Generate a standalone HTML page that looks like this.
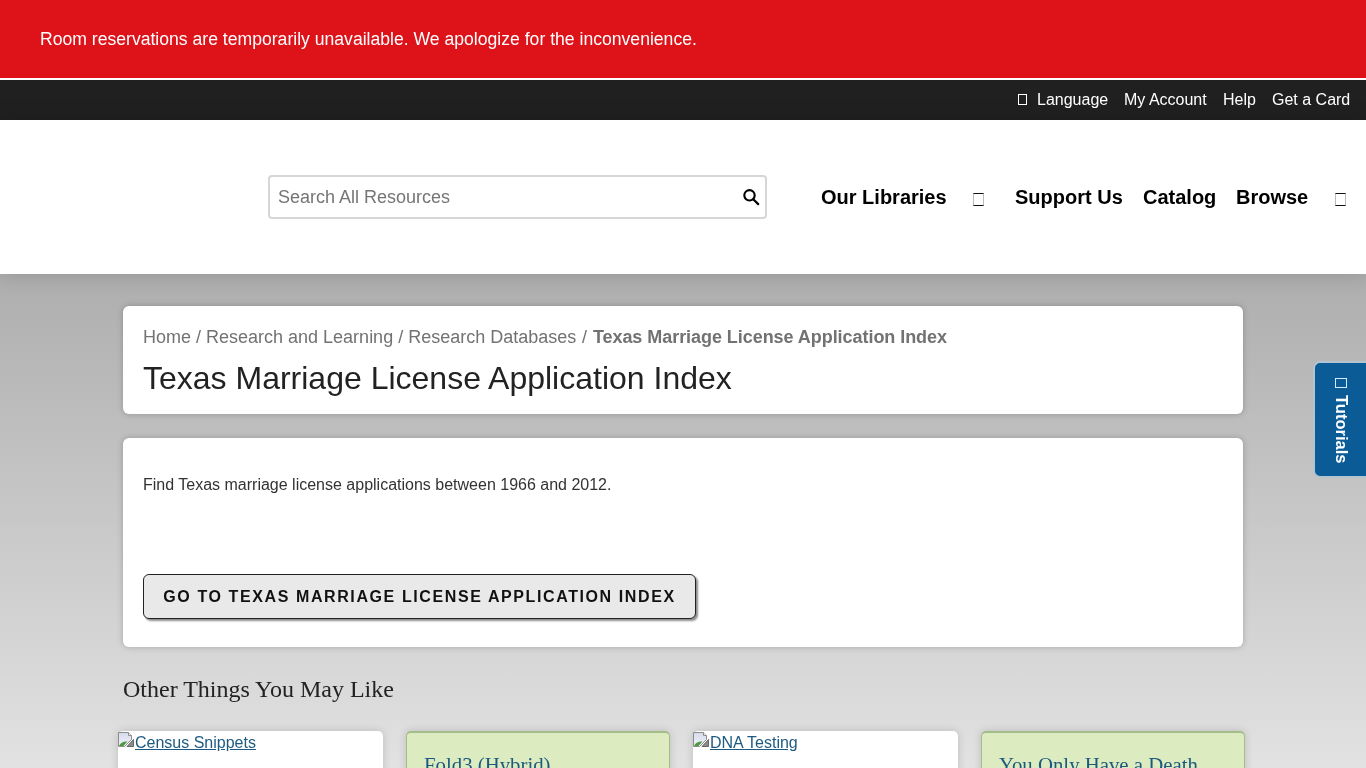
<!DOCTYPE html>
<html><head><meta charset="utf-8">
<style>
*{box-sizing:border-box;margin:0;padding:0}
html,body{width:1366px;height:768px;overflow:hidden}
body{will-change:transform;font-family:"Liberation Sans",sans-serif;position:relative;background:#fff}
.abs{position:absolute;white-space:nowrap}
.tofu{display:inline-block;border:1px solid currentColor;box-sizing:border-box}
.tofu2{z-index:3;border-top:1px solid #111;border-bottom:1px solid #111;border-left:1px solid #bbb;border-right:1px solid #bbb}
#alert{position:absolute;left:0;top:0;width:1366px;height:78px;background:#de1219}
#alert .t{left:40px;top:29px;font-size:17.6px;line-height:20px;color:#fff}
#wl{position:absolute;left:0;top:78px;width:1366px;height:2px;background:#fff}
#util{position:absolute;left:0;top:80px;width:1366px;height:40px;background:#202020;color:#fff;font-size:16px}
#util .t{top:10px;line-height:20px}
#hdr{position:absolute;left:0;top:120px;width:1366px;height:154px;background:#fff;box-shadow:0 0 20px rgba(0,0,0,.16);z-index:2}
#search{position:absolute;left:268px;top:175px;width:499px;height:44px;border:2px solid #d6d6d6;border-radius:4px;background:#fff;z-index:3}
#search .ph{left:8px;top:9px;font-size:18px;line-height:22px;color:#757575}
.nav{z-index:3;top:185px;font-size:20px;line-height:24px;font-weight:bold;color:#000}
#main{position:absolute;left:0;top:274px;width:1366px;height:494px;background:linear-gradient(#aeaeae,#e2e2e2)}
.card{position:absolute;background:#fff;border-radius:6px;box-shadow:0 0 6px rgba(0,0,0,.22)}
#c1{left:123px;top:306px;width:1120px;height:108px}
#c2{left:123px;top:438px;width:1120px;height:209px}
.bc{left:20px;top:20px;font-size:18px;line-height:22px;color:#727272}
.bc b{font-weight:bold}
.h1{left:20px;top:52px;font-size:32px;line-height:40px;color:#222}
.desc{left:20px;top:37px;font-size:16px;line-height:20px;color:#333}
#btn{position:absolute;left:20px;top:136px;width:553px;height:45px;border:1px solid #222;border-radius:6px;background:#e9e9e9;box-shadow:2px 2px 2px rgba(0,0,0,.45);font-weight:bold;font-size:16px;letter-spacing:1.6px;color:#111;text-align:center;line-height:43px}
#other{left:123px;top:675px;font-family:"Liberation Serif",serif;font-size:24px;line-height:28px;color:#222}
.rc{position:absolute;top:731px;height:60px;border-radius:5px;box-shadow:0 0 8px rgba(0,0,0,.16)}
.rc.w{background:#fff}
.rc.g{background:#dcebc0;border:1px solid #a4bd88;border-top-width:2px}
.lnk{font-size:16px;color:#1d5a82;text-decoration:underline}
.ser{font-family:"Liberation Serif",serif;font-size:20.8px;color:#1b5a7e}
#tut{position:absolute;left:1313px;top:361px;width:53px;height:117px;background:#0a5b96;border-radius:7px 0 0 7px;border:2px solid #b3c3cf;border-right:none}
#tut .tt{writing-mode:vertical-rl;font-size:16.5px;font-weight:bold;line-height:20px;color:#fff;left:17px;top:32px}
#tut .tb{left:20px;top:15px;width:12px;height:10px;border:1px solid #d4ecff}
</style></head><body>
<div id="alert"><div class="abs t">Room reservations are temporarily unavailable. We apologize for the inconvenience.</div></div>
<div id="wl"></div>
<div id="util">
 <span class="abs tofu" style="left:1018px;top:14px;width:9px;height:11px"></span>
 <span class="abs t" style="left:1037px">Language</span>
 <span class="abs t" style="left:1124px">My Account</span>
 <span class="abs t" style="left:1223px">Help</span>
 <span class="abs t" style="left:1272px">Get a Card</span>
</div>
<div id="hdr"></div>
<div id="search"><span class="abs ph">Search All Resources</span>
 <svg class="abs" style="left:472px;top:12px" width="18" height="18" viewBox="0 0 18 18"><circle cx="7.5" cy="6.3" r="5.2" fill="none" stroke="#000" stroke-width="2.1"/><line x1="11.3" y1="10.2" x2="16.2" y2="15.1" stroke="#000" stroke-width="2.2" stroke-linecap="round"/></svg>
</div>
<span class="abs nav" style="left:821px">Our Libraries</span>
<span class="abs tofu2" style="left:973px;top:193px;width:11px;height:13px"></span>
<span class="abs nav" style="left:1015px">Support Us</span>
<span class="abs nav" style="left:1143px">Catalog</span>
<span class="abs nav" style="left:1236px">Browse</span>
<span class="abs tofu2" style="left:1335px;top:193px;width:11px;height:13px"></span>
<div id="main"></div>
<div class="card" id="c1">
 <div class="abs bc">Home / Research and Learning / Research Databases <span style="margin-left:.8px">/</span> <b style="margin-left:.8px;letter-spacing:-0.05px">Texas Marriage License Application Index</b></div>
 <div class="abs h1">Texas Marriage License Application Index</div>
</div>
<div class="card" id="c2">
 <div class="abs desc">Find Texas marriage license applications between 1966 and 2012.</div>
 <div id="btn">GO TO TEXAS MARRIAGE LICENSE APPLICATION INDEX</div>
</div>
<div class="abs" id="other">Other Things You May Like</div>
<div class="rc w" style="left:118px;width:265px"><svg class="abs" style="left:0;top:-1px" width="16" height="17" viewBox="0 0 16 17"><defs><linearGradient id="sk" x1="0" y1="0" x2="0" y2="1"><stop offset="0" stop-color="#d5d9ea"/><stop offset="1" stop-color="#f2f6ff"/></linearGradient></defs><path d="M0.5 2.5H10.5L13.5 5.5V9.5L6.5 16.5H0.5Z" fill="url(#sk)" stroke="#8c8c8c"/><path d="M1 16Q3 11 9.5 11.5L5.5 16Z" fill="#4f9a3e"/><path d="M10.5 2.5V5.5H13.5" fill="#f4f4f4" stroke="#8c8c8c"/><path d="M15.5 9.5V16.5H9Z" fill="#8a8a8a" stroke="#6a6a6a"/></svg><span class="abs lnk" style="left:17px;top:3px">Census Snippets</span></div>
<div class="rc g" style="left:406px;width:264px"><span class="abs ser" style="left:17px;top:20px">Fold3 (Hybrid)</span></div>
<div class="rc w" style="left:693px;width:265px"><svg class="abs" style="left:0;top:-1px" width="16" height="17" viewBox="0 0 16 17"><defs><linearGradient id="sk2" x1="0" y1="0" x2="0" y2="1"><stop offset="0" stop-color="#d5d9ea"/><stop offset="1" stop-color="#f2f6ff"/></linearGradient></defs><path d="M0.5 2.5H10.5L13.5 5.5V9.5L6.5 16.5H0.5Z" fill="url(#sk2)" stroke="#8c8c8c"/><path d="M1 16Q3 11 9.5 11.5L5.5 16Z" fill="#4f9a3e"/><path d="M10.5 2.5V5.5H13.5" fill="#f4f4f4" stroke="#8c8c8c"/><path d="M15.5 9.5V16.5H9Z" fill="#8a8a8a" stroke="#6a6a6a"/></svg><span class="abs lnk" style="left:17px;top:3px">DNA Testing</span></div>
<div class="rc g" style="left:981px;width:264px"><span class="abs ser" style="left:17px;top:20px">You Only Have a Death</span></div>
<div id="tut"><span class="abs tb"></span><span class="abs tt">Tutorials</span></div>
</body></html>
